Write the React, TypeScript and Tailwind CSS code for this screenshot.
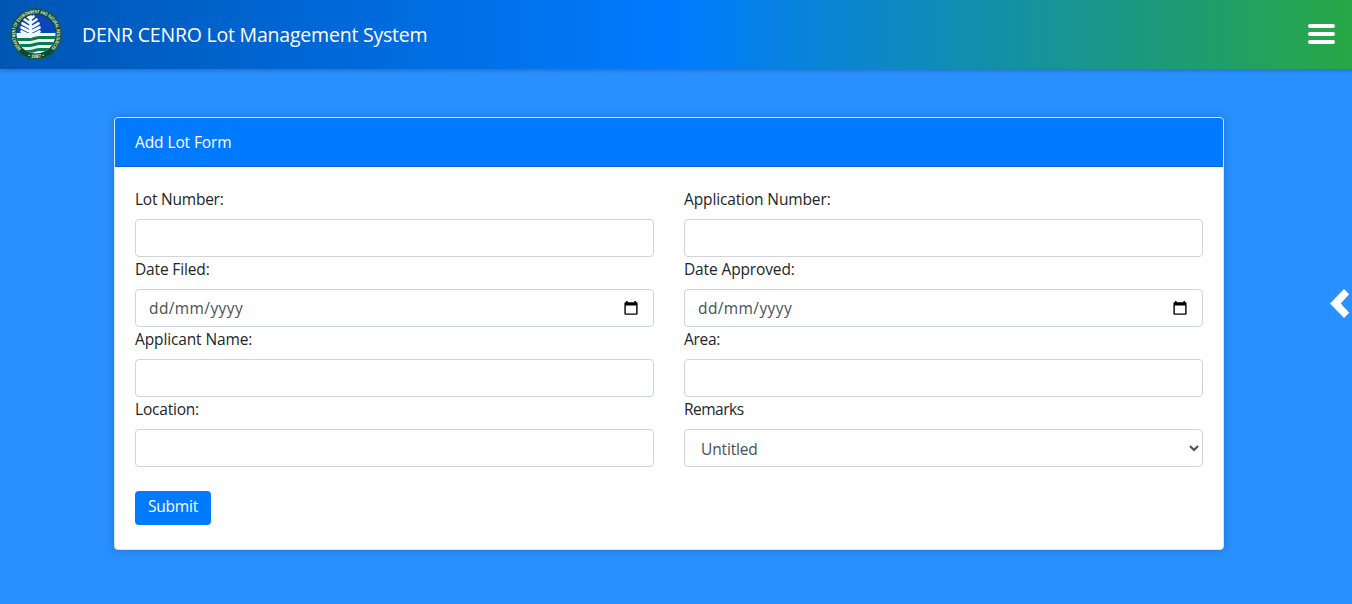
import type { ReactNode } from 'react';

const control =
  'flex h-[38px] w-full items-center rounded-[4px] border border-[#ced4da] bg-white text-[15.5px] text-[#495057]';

function Field({ label, id, tracking, children }: { label: string; id: string; tracking: string; children?: ReactNode }) {
  return (
    <div className="flex h-[70px] flex-col">
      <label htmlFor={id} className={`mb-2 block h-6 text-[15.5px] leading-6 ${tracking}`}>
        {label}
      </label>
      {children ?? <input id={id} type="text" className={`${control} px-3`} />}
    </div>
  );
}

function CalendarIcon() {
  return (
    <svg width="14" height="15" viewBox="0 0 14 15" aria-hidden="true">
      <path d="M2 0h1.600v1.300h6.800V0H12v1.300h.600a1 1 0 0 1 1 1v10.500a1 1 0 0 1-1 1H1.400a1 1 0 0 1-1-1V2.300a1 1 0 0 1 1-1H2zM1.800 4.600v7.900h10.400V4.600z" fill="#000" fillRule="evenodd" />
    </svg>
  );
}

function DateControl({ id }: { id: string }) {
  return (
    <div className={`${control} pl-[13px] pr-[15px]`}>
      <input id={id} type="text" placeholder="dd/mm/yyyy" className="min-w-0 flex-1 pt-0.5 tracking-[0.4px] outline-none placeholder:text-[#495057]" />
      <CalendarIcon />
    </div>
  );
}

function Seal() {
  return (
    <svg width="52" height="52" viewBox="0 0 52 52" aria-label="DENR seal" className="mb-0.5">
      <defs>
        <clipPath id="disc"><circle cx="26" cy="26" r="19.500" /></clipPath>
        <path id="ring" d="M11.300 40.700A20.800 20.800 0 1 1 40.700 40.700" />
        <path id="base" d="M16 47.800A24 24 0 0 0 36 47.800" />
      </defs>
      <circle cx="26" cy="26" r="25.700" fill="#084b31" />
      <circle cx="26" cy="26" r="25.200" fill="none" stroke="#356d55" strokeWidth=".6" />
      <g clipPath="url(#disc)">
        <path fill="#0b45b7" d="M5 5h42v22H5z" />
        <path fill="#edf7f2" d="M5 25h42v22H5z" />
        <g fill="none" stroke="#087a50" strokeWidth="3">
          <path d="M5 31.500h14c5 0 6-2 11-2h17M5 37.500h14c5 0 6-2 11-2h17M5 43.500h14c5 0 6-2 11-2h17" />
        </g>
        <g fill="none" stroke="#f3f8fc" strokeWidth="2.700" strokeLinecap="round">
          <path d="M20.500 8v21M20.500 11l-3-2.500M20.500 11l3-2.500M20.500 15.500l-6-4M20.500 15.500l6-4M20.500 20l-8-4.500M20.500 20l8-4.500M20.500 24l-9-4.500M20.500 24l9-4.500M20.500 28l-9-4.500M20.500 28l9-4.500" />
        </g>
      </g>
      <text fill="#e8eee8" fontSize="4.800" fontWeight="700" fontFamily="Liberation Sans, sans-serif">
        <textPath href="#ring" textLength="97" lengthAdjust="spacingAndGlyphs">DEPARTMENT OF ENVIRONMENT AND NATURAL RESOURCES</textPath>
      </text>
      <text fill="#e8eee8" fontSize="4.800" fontWeight="700" fontFamily="Liberation Sans, sans-serif">
        <textPath href="#base" startOffset="50%" textAnchor="middle">• 1987 •</textPath>
      </text>
    </svg>
  );
}

export default function App() {
  return (
    <div className="flex h-[604px] w-full flex-col overflow-hidden bg-[#2990ff] font-['Open_Sans','Noto_Sans',sans-serif] text-[#212529]">
      <header className="relative flex h-[69px] shrink-0 items-center justify-between bg-linear-to-r/srgb from-[#0056b3] via-[#007bff] to-[#28a745] pl-[10px] pr-[17px] shadow-[0_2px_4px_rgba(0,0,0,0.2)]">
        <div className="flex items-center gap-5">
          <Seal />
          <h1 className="text-[19.5px] leading-[30px] tracking-[-0.21px] text-white">DENR CENRO Lot Management System</h1>
        </div>
        <button aria-label="Open menu" className="mb-0.5 flex w-[27px] flex-col gap-1">
          <span className="h-1 rounded-[2px] bg-white" />
          <span className="h-1 rounded-[2px] bg-white" />
          <span className="h-1 rounded-[2px] bg-white" />
        </button>
      </header>
      <div className="relative flex flex-1 justify-center pr-[14px] pt-12">
        <main className="h-[433px] w-[1110px] overflow-hidden rounded-[4px] border border-[#d5e5f5] bg-white shadow-[0_0_10px_rgba(0,0,0,0.2)]">
          <div className="h-[49px] border-b border-[#0868d0] bg-[#007bff] px-5 py-3 text-[15.5px] leading-6 text-white">
            <h2 className="inline-block tracking-[-0.1px]">Add Lot Form</h2>
          </div>
          <form className="px-5 pt-5" onSubmit={(e) => e.preventDefault()}>
            <div className="grid grid-cols-2 gap-x-[30px]">
              <Field id="lot" label="Lot Number:" tracking="tracking-[-0.23px]" />
              <Field id="application" label="Application Number:" tracking="tracking-[-0.13px]" />
              <Field id="filed" label="Date Filed:" tracking="tracking-[-0.15px]"><DateControl id="filed" /></Field>
              <Field id="approved" label="Date Approved:" tracking="tracking-[-0.13px]"><DateControl id="approved" /></Field>
              <Field id="applicant" label="Applicant Name:" tracking="tracking-[-0.13px]" />
              <Field id="area" label="Area:" tracking="tracking-[-0.3px]" />
              <Field id="location" label="Location:" tracking="tracking-[-0.2px]" />
              <Field id="remarks" label="Remarks" tracking="tracking-[-0.5px]">
                <button id="remarks" type="button" className={`${control} justify-between pl-4 pr-[3px]`}>
                  <span className="pt-[3px] tracking-[-0.15px]">Untitled</span>
                  <svg width="10" height="8" viewBox="0 0 10 8" fill="none" stroke="#495057" strokeWidth="2"><path d="m1 2 4 4 4-4" /></svg>
                </button>
              </Field>
            </div>
            <button type="submit" className="mt-6 flex h-[34px] w-[76px] justify-center rounded-[4px] bg-[#007bff] pt-[3px] text-[15.5px] leading-6 text-white">
              <span className="tracking-[-0.2px]">Submit</span>
            </button>
          </form>
        </main>
        <button aria-label="Open side panel" className="absolute right-[2px] top-[220px]">
          <svg width="20" height="29" viewBox="0 0 20 29"><path fill="#fff" d="M0 14.500 14 0l5.200 5.200-8.500 9.300 8.500 9.300L14 29z" /></svg>
        </button>
      </div>
    </div>
  );
}
